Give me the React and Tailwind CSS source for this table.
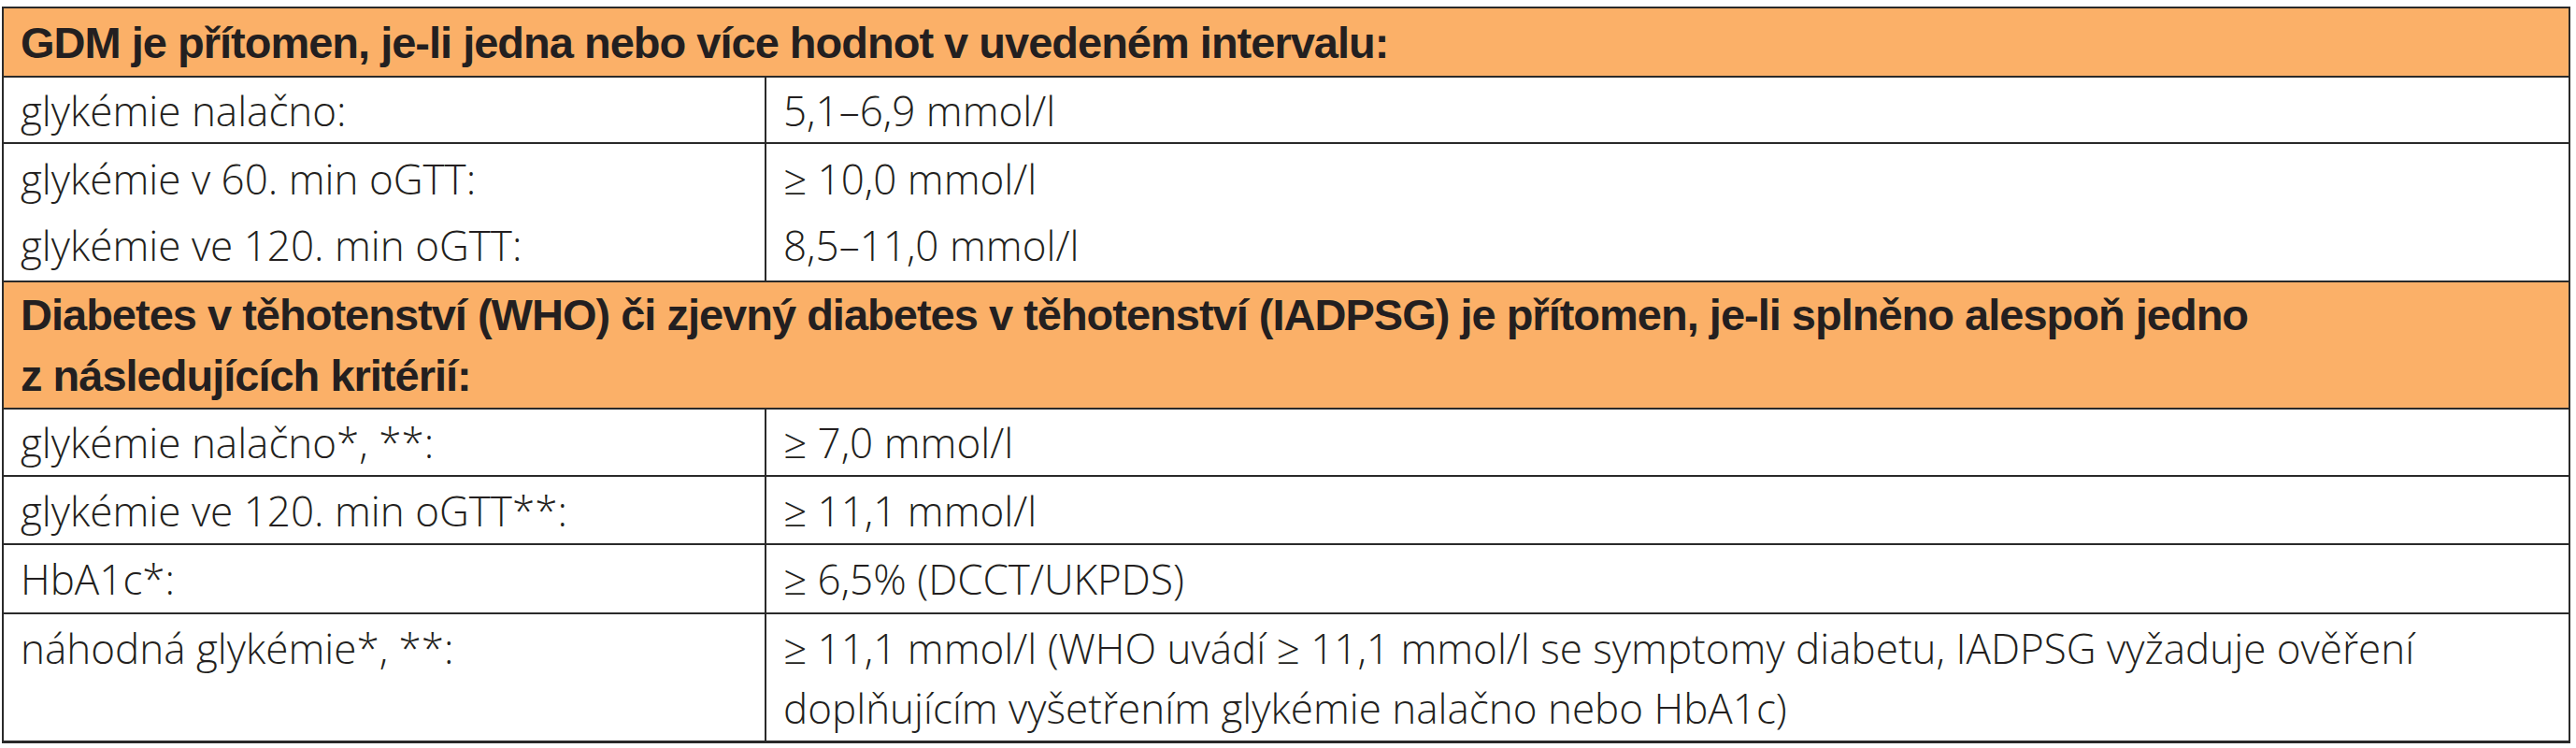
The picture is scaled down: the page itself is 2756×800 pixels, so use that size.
const body = { fontFamily: '"Open Sans", "Liberation Sans", sans-serif' }
const head = { fontFamily: '"Liberation Sans", Arial, sans-serif' }

function HeadRow({ h, children }) {
  return (
    <div
      className={`flex items-center border-b-2 border-[#2a2a2a] bg-[#fbb068] pl-[18px] text-[47px] font-bold leading-[65px] tracking-[-1px] text-[#231f20] ${h}`}
      style={head}
    >
      <div>{children}</div>
    </div>
  )
}

function Row({ h, label, value, last }) {
  return (
    <div className={`flex ${last ? '' : 'border-b-2 border-[#2a2a2a]'} ${h}`}>
      <div className="flex w-[816px] shrink-0 items-center border-r-2 border-[#2a2a2a] pl-[18px]">
        <div>{label}</div>
      </div>
      <div className="flex flex-1 items-center pl-[18px]">
        <div>{value}</div>
      </div>
    </div>
  )
}

export default function App() {
  return (
    <div className="min-h-screen bg-white pt-[7px]">
      <div
        className="ml-[2px] w-[2748px] border-2 border-b-[3px] border-[#2a2a2a] text-[44px] font-light leading-[64px] text-[#231f20]"
        style={body}
      >
        <HeadRow h="h-[74px]">GDM je přítomen, je-li jedna nebo více hodnot v uvedeném intervalu:</HeadRow>
        <Row h="h-[71px]" label="glykémie nalačno:" value="5,1–6,9 mmol/l" />
        <div className="flex h-[148px] border-b-2 border-[#2a2a2a]">
          <div className="flex w-[816px] shrink-0 flex-col justify-center border-r-2 border-[#2a2a2a] pl-[18px] leading-[71px]">
            <div>glykémie v 60. min oGTT:</div>
            <div>glykémie ve 120. min oGTT:</div>
          </div>
          <div className="flex flex-1 flex-col justify-center pl-[18px] leading-[71px]">
            <div>≥ 10,0 mmol/l</div>
            <div>8,5–11,0 mmol/l</div>
          </div>
        </div>
        <HeadRow h="h-[136px]">
          Diabetes v těhotenství (WHO) či zjevný diabetes v těhotenství (IADPSG) je přítomen, je-li splněno alespoň jedno
          <br />
          z následujících kritérií:
        </HeadRow>
        <Row h="h-[72px]" label="glykémie nalačno*, **:" value="≥ 7,0 mmol/l" />
        <Row h="h-[73px]" label="glykémie ve 120. min oGTT**:" value="≥ 11,1 mmol/l" />
        <Row h="h-[74px]" label="HbA1c*:" value="≥ 6,5% (DCCT/UKPDS)" />
        <div className="flex h-[135px]">
          <div className="w-[816px] shrink-0 border-r-2 border-[#2a2a2a] pl-[18px] pt-[4px]">
            náhodná glykémie*, **:
          </div>
          <div className="flex flex-1 flex-col justify-center pl-[18px]">
            <div>≥ 11,1 mmol/l (WHO uvádí ≥ 11,1 mmol/l se symptomy diabetu, IADPSG vyžaduje ověření</div>
            <div>doplňujícím vyšetřením glykémie nalačno nebo HbA1c)</div>
          </div>
        </div>
      </div>
    </div>
  )
}
